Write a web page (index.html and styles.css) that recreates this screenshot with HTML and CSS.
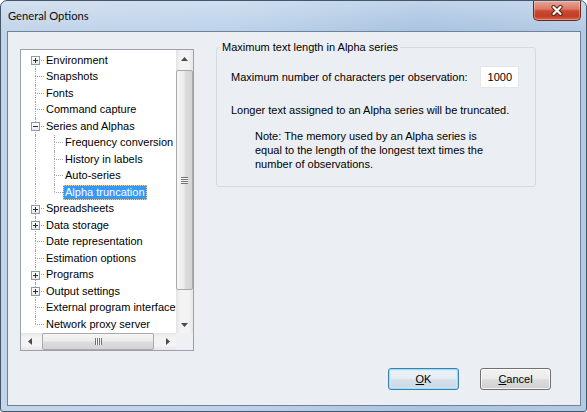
FILE: index.html
```html
<!DOCTYPE html>
<html>
<head>
<meta charset="utf-8">
<title>General Options</title>
<link rel="stylesheet" href="styles.css">
</head>
<body>
<div class="window">
  <div class="titlebar">
    <span class="title">General Options</span>
    <span class="close"><svg width="12" height="11" viewBox="0 0 12 11"><path d="M2.5 2 L9.5 9 M9.5 2 L2.5 9" stroke="#5a2116" stroke-width="4.2" stroke-linecap="round" fill="none"/><path d="M2.5 2 L9.5 9 M9.5 2 L2.5 9" stroke="#ffffff" stroke-width="2.2" stroke-linecap="round" fill="none"/></svg></span>
  </div>
  <div class="client">
    <div class="main">
      <div class="tree">
        <div class="tree-items">
          <div class="row first"><span class="ind"></span><span class="br"><span class="exp"><svg width="7" height="7" viewBox="0 0 7 7"><rect x="1" y="3" width="5" height="1"/><rect x="3" y="1" width="1" height="5"/></svg></span></span><span class="lbl">Environment</span></div>
          <div class="row"><span class="ind"></span><span class="br"></span><span class="lbl">Snapshots</span></div>
          <div class="row"><span class="ind"></span><span class="br"></span><span class="lbl">Fonts</span></div>
          <div class="row"><span class="ind"></span><span class="br"></span><span class="lbl">Command capture</span></div>
          <div class="row"><span class="ind"></span><span class="br"><span class="exp"><svg width="7" height="7" viewBox="0 0 7 7"><rect x="1" y="3" width="5" height="1"/></svg></span></span><span class="lbl">Series and Alphas</span></div>
          <div class="row"><span class="ind"></span><span class="pipe"></span><span class="br"></span><span class="lbl">Frequency conversion</span></div>
          <div class="row"><span class="ind"></span><span class="pipe"></span><span class="br"></span><span class="lbl">History in labels</span></div>
          <div class="row"><span class="ind"></span><span class="pipe"></span><span class="br"></span><span class="lbl">Auto-series</span></div>
          <div class="row last"><span class="ind"></span><span class="pipe"></span><span class="br"></span><span class="lbl selected">Alpha truncation</span></div>
          <div class="row"><span class="ind"></span><span class="br"><span class="exp"><svg width="7" height="7" viewBox="0 0 7 7"><rect x="1" y="3" width="5" height="1"/><rect x="3" y="1" width="1" height="5"/></svg></span></span><span class="lbl">Spreadsheets</span></div>
          <div class="row"><span class="ind"></span><span class="br"><span class="exp"><svg width="7" height="7" viewBox="0 0 7 7"><rect x="1" y="3" width="5" height="1"/><rect x="3" y="1" width="1" height="5"/></svg></span></span><span class="lbl">Data storage</span></div>
          <div class="row"><span class="ind"></span><span class="br"></span><span class="lbl">Date representation</span></div>
          <div class="row"><span class="ind"></span><span class="br"></span><span class="lbl">Estimation options</span></div>
          <div class="row"><span class="ind"></span><span class="br"><span class="exp"><svg width="7" height="7" viewBox="0 0 7 7"><rect x="1" y="3" width="5" height="1"/><rect x="3" y="1" width="1" height="5"/></svg></span></span><span class="lbl">Programs</span></div>
          <div class="row"><span class="ind"></span><span class="br"><span class="exp"><svg width="7" height="7" viewBox="0 0 7 7"><rect x="1" y="3" width="5" height="1"/><rect x="3" y="1" width="1" height="5"/></svg></span></span><span class="lbl">Output settings</span></div>
          <div class="row"><span class="ind"></span><span class="br"></span><span class="lbl">External program interface</span></div>
          <div class="row last"><span class="ind"></span><span class="br"></span><span class="lbl">Network proxy server</span></div>
        </div>
        <div class="vscroll">
          <div class="sb-btn"><svg width="7" height="4" viewBox="0 0 7 4"><path d="M3.5 0 L7 4 L0 4 Z"/></svg></div>
          <div class="vtrack"><div class="vthumb"><span class="grip-v"></span></div></div>
          <div class="sb-btn"><svg width="7" height="4" viewBox="0 0 7 4"><path d="M0 0 L7 0 L3.5 4 Z"/></svg></div>
        </div>
        <div class="hscroll">
          <div class="sb-btn"><svg width="4" height="7" viewBox="0 0 4 7"><path d="M4 0 L4 7 L0 3.5 Z"/></svg></div>
          <div class="htrack"><div class="hthumb"><span class="grip-h"></span></div></div>
          <div class="sb-btn"><svg width="4" height="7" viewBox="0 0 4 7"><path d="M0 0 L4 3.5 L0 7 Z"/></svg></div>
        </div>
        <div class="corner"></div>
      </div>
      <fieldset class="group">
        <legend>Maximum text length in Alpha series</legend>
        <div class="group-body">
          <div class="field-row">
            <label class="field-label" for="maxchars">Maximum number of characters per observation:</label>
            <input id="maxchars" class="num" type="text" value="1000">
          </div>
          <p class="info">Longer text assigned to an Alpha series will be truncated.</p>
          <p class="note">Note: The memory used by an Alpha series is<br>equal to the length of the longest text times the<br>number of observations.</p>
        </div>
      </fieldset>
    </div>
    <div class="buttons">
      <button class="btn default" type="button"><u>O</u>K</button>
      <button class="btn" type="button"><u>C</u>ancel</button>
    </div>
  </div>
</div>
</body>
</html>
```
FILE: styles.css
```css
*, *::before, *::after { box-sizing: border-box; }
html, body { margin: 0; padding: 0; }
body {
  width: 587px;
  height: 412px;
  overflow: hidden;
  background: #ffffff;
  font-family: "Liberation Sans", Arial, sans-serif;
  font-size: 11px;
  color: #000;
}

.window {
  width: 587px;
  height: 412px;
  border: 1px solid #44566b;
  border-radius: 7px 7px 3px 3px;
  padding: 0 5px 5px 6px;
  display: flex;
  flex-direction: column;
  overflow: hidden;
  background:
    linear-gradient(180deg, rgba(255,255,255,0.28), rgba(255,255,255,0) 30px),
    linear-gradient(90deg, #c3d5e9 0%, #bdd2ea 40%, #a9c3e1 72%, #b3cae4 100%);
}

.titlebar {
  height: 30px;
  flex: none;
  display: flex;
  align-items: flex-start;
  justify-content: space-between;
}
.title {
  padding-left: 1px;
  line-height: 30px;
  font-family: Lato, "Liberation Sans", sans-serif;
  font-size: 11.2px;
  color: #0c0c0c;
}
.close {
  width: 48px;
  height: 20px;
  border: 1px solid #6a2a20;
  border-top: 0;
  border-radius: 0 0 5px 5px;
  display: flex;
  align-items: center;
  justify-content: center;
  background: linear-gradient(180deg, #e9a596 0%, #db7a66 42%, #c94a32 52%, #c23d24 80%, #d66a50 100%);
  box-shadow: inset 0 0 0 1px rgba(255,255,255,0.3);
}

.client {
  flex: 1;
  border: 1px solid #6f8298;
  background: #ebeff4;
  display: flex;
  flex-direction: column;
}
.main {
  display: flex;
  align-items: flex-start;
  padding: 9px 0 0 12px;
}

/* Tree view */
.tree {
  margin-top: 8px;
  width: 174px;
  height: 302px;
  border: 1px solid #9aa2ac;
  background: #fff;
  display: grid;
  grid-template-columns: 155px 17px;
  grid-template-rows: 283px 17px;
}
.tree-items {
  overflow: hidden;
  padding-top: 2px;
  white-space: nowrap;
}
.row {
  display: flex;
  align-items: center;
  height: 16.5px;
}
.ind { width: 14px; flex: none; align-self: stretch; }
.pipe {
  width: 19px;
  flex: none;
  align-self: stretch;
  border-left: 1px dotted #a3a3a3;
}
.br {
  width: 9px;
  flex: none;
  align-self: stretch;
  display: flex;
  flex-direction: column;
  position: relative;
}
.br::before {
  content: "";
  flex: 1;
  border-left: 1px dotted #a3a3a3;
}
.br::after {
  content: "";
  flex: 1;
  border-left: 1px dotted #a3a3a3;
  border-top: 1px dotted #a3a3a3;
}
.first .br::before { border-left-color: transparent; }
.last .br::after { border-left-color: transparent; }
.exp {
  position: absolute;
  left: -4px;
  top: calc(50% - 4px);
  width: 9px;
  height: 9px;
  border: 1px solid #8e9aa6;
  background: linear-gradient(180deg, #ffffff, #e6e9ec);
  display: flex;
}
.exp svg { fill: #2d2d2d; }
.lbl {
  padding: 0 2px;
  height: 15px;
  line-height: 15px;
  flex: none;
}
.lbl.selected {
  background: #3399ff;
  color: #fff;
  outline: 1px dotted #f3d38c;
  outline-offset: -1px;
}

/* Scrollbars */
.vscroll, .hscroll {
  display: flex;
  background: linear-gradient(90deg, #e4e4e4, #f3f3f3 25%, #f3f3f3 75%, #e6e6e6);
}
.vscroll { flex-direction: column; }
.hscroll {
  background: linear-gradient(180deg, #e4e4e4, #f3f3f3 25%, #f3f3f3 75%, #e6e6e6);
}
.sb-btn {
  flex: none;
  width: 17px;
  height: 17px;
  display: flex;
  align-items: center;
  justify-content: center;
}
.sb-btn svg { fill: #4a4a4a; }
.vtrack { flex: 1; padding-top: 3px; }
.vthumb {
  height: 220px;
  border: 1px solid #a9a9a9;
  border-radius: 2px;
  background: linear-gradient(90deg, #f6f6f6, #ececec 45%, #dcdcdc 55%, #d4d4d4);
  display: flex;
  align-items: center;
  justify-content: center;
}
.grip-v {
  width: 7px;
  height: 7px;
  background: repeating-linear-gradient(180deg, #707070 0 1px, #f8f8f8 1px 2px);
}
.htrack { flex: 1; padding-left: 4px; }
.hthumb {
  width: 112px;
  height: 17px;
  border: 1px solid #a9a9a9;
  border-radius: 2px;
  background: linear-gradient(180deg, #f6f6f6, #ececec 45%, #dcdcdc 55%, #d4d4d4);
  display: flex;
  align-items: center;
  justify-content: center;
}
.grip-h {
  width: 7px;
  height: 7px;
  background: repeating-linear-gradient(90deg, #707070 0 1px, #f8f8f8 1px 2px);
}
.corner { background: #eef0f3; }

/* Group box */
.group {
  margin: 0 0 0 22px;
  padding: 0;
  width: 320px;
  min-width: 0;
  border: 1px solid #d3dbe3;
  border-radius: 3px;
}
.group legend {
  margin-left: 3px;
  padding: 0 2px;
  line-height: 13px;
  font-size: 11px;
}
.group-body { padding: 12px 16px 15px 14px; }
.field-row {
  display: flex;
  align-items: center;
  height: 22px;
}
.field-label { flex: none; }
.num {
  margin: 0 0 0 12px;
  width: 39px;
  height: 22px;
  border: 1px solid #e1e7ed;
  background: #fff;
  padding: 0 0 0 7px;
  font-family: "Liberation Sans", Arial, sans-serif;
  font-size: 11px;
  color: #000;
  outline: none;
}
.info { margin: 16px 0 0; line-height: 13px; }
.note { margin: 12px 0 0 24px; line-height: 14px; }

/* Buttons */
.buttons {
  display: flex;
  justify-content: flex-end;
  gap: 21px;
  margin-top: 17px;
  padding-right: 29px;
}
.btn {
  width: 71px;
  height: 22px;
  margin: 0;
  padding: 0;
  border: 1px solid #707070;
  border-radius: 3px;
  font-family: "Liberation Sans", Arial, sans-serif;
  font-size: 11px;
  color: #000;
  background: linear-gradient(180deg, #f2f2f2 0%, #ebebeb 50%, #dddddd 51%, #cfcfcf 100%);
  box-shadow: inset 0 0 0 1px rgba(255,255,255,0.75);
}
.btn.default {
  border-color: #3c7fb1;
  background: linear-gradient(180deg, #eef3f7 0%, #e4ecf2 50%, #d6e1ea 51%, #cbd8e2 100%);
  box-shadow: inset 0 0 0 1px #9fdcf6, inset 0 0 0 2px rgba(200,238,252,0.7);
}
```
